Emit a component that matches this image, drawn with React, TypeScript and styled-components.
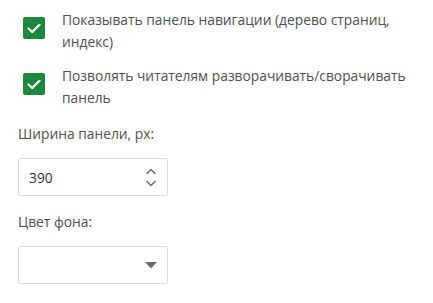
import React, { useState } from 'react';
import styled, { createGlobalStyle } from 'styled-components';

const GlobalStyle = createGlobalStyle`
  html, body {
    margin: 0;
    padding: 0;
    background: #ffffff;
  }
  body {
    font-family: "Open Sans", "Noto Sans", sans-serif;
    color: #505050;
  }
`;

const App: React.FC = () => {
  const [showNav, setShowNav] = useState(true);
  const [collapsible, setCollapsible] = useState(true);
  const [width, setWidth] = useState(390);

  return (
    <>
      <GlobalStyle />
      <Panel>
        <CheckRow onClick={() => setShowNav(!showNav)}>
          <CheckBox checked={showNav}>
            {showNav && <CheckMark />}
          </CheckBox>
          <CheckLabel>Показывать панель навигации (дерево страниц, индекс)</CheckLabel>
        </CheckRow>

        <CheckRow onClick={() => setCollapsible(!collapsible)}>
          <CheckBox checked={collapsible}>
            {collapsible && <CheckMark />}
          </CheckBox>
          <CheckLabel>Позволять читателям разворачивать/сворачивать панель</CheckLabel>
        </CheckRow>

        <Field>
          <FieldLabel>Ширина панели, px:</FieldLabel>
          <InputBox>
            <NumberValue>{width}</NumberValue>
            <Spinner>
              <SpinButton onClick={() => setWidth(width + 1)}>
                <svg width="12" height="7" viewBox="0 0 12 7">
                  <path d="M1.5 6 L6 1.5 L10.5 6" fill="none" stroke="#666" strokeWidth="1.3" />
                </svg>
              </SpinButton>
              <SpinButton onClick={() => setWidth(width - 1)}>
                <svg width="12" height="7" viewBox="0 0 12 7">
                  <path d="M1.5 1 L6 5.5 L10.5 1" fill="none" stroke="#666" strokeWidth="1.3" />
                </svg>
              </SpinButton>
            </Spinner>
          </InputBox>
        </Field>

        <Field>
          <FieldLabel>Цвет фона:</FieldLabel>
          <InputBox>
            <span />
            <svg width="12" height="7" viewBox="0 0 12 7">
              <path d="M0 0 H12 L6 6.5 Z" fill="#6b6b6b" />
            </svg>
          </InputBox>
        </Field>
      </Panel>
    </>
  );
};

const CheckMark: React.FC = () => (
  <svg width="14" height="11" viewBox="0 0 14 11">
    <path d="M1.5 5.5 L5.2 9 L12.5 1.8" fill="none" stroke="#ffffff" strokeWidth="2.2" strokeLinecap="round" strokeLinejoin="round" />
  </svg>
);

const Panel = styled.div`
  width: 433px;
  height: 303px;
  box-sizing: border-box;
  padding: 9px 0 0 18px;
  display: flex;
  flex-direction: column;
`;

const CheckRow = styled.div`
  display: flex;
  align-items: flex-start;
  gap: 17px;
  padding-left: 5px;
  margin-bottom: 12px;
  cursor: pointer;
`;

const CheckBox = styled.div<{ checked: boolean }>`
  flex: 0 0 auto;
  width: 22px;
  height: 22px;
  margin-top: 8px;
  border-radius: 2px;
  background: ${(props) => (props.checked ? '#1b893d' : '#ffffff')};
  border: ${(props) => (props.checked ? 'none' : '1px solid #999')};
  display: flex;
  align-items: center;
  justify-content: center;
`;

const CheckLabel = styled.div`
  font-size: 13.8px;
  line-height: 22px;
  color: #505050;
  width: 355px;
`;

const Field = styled.div`
  display: flex;
  flex-direction: column;
  margin-top: 2px;
`;

const FieldLabel = styled.div`
  font-size: 13.8px;
  line-height: 22px;
  color: #505050;
  margin-bottom: 13px;
`;

const InputBox = styled.div`
  width: 150px;
  height: 38px;
  box-sizing: border-box;
  border: 1px solid #dcdcdc;
  border-radius: 2px;
  display: flex;
  align-items: center;
  justify-content: space-between;
  padding: 0 10px 0 10px;
  margin-bottom: 13px;
`;

const NumberValue = styled.span`
  font-size: 13.8px;
  color: #333333;
`;

const Spinner = styled.div`
  display: flex;
  flex-direction: column;
  gap: 5px;
`;

const SpinButton = styled.div`
  display: flex;
  cursor: pointer;
  line-height: 0;
`;

export default App;
